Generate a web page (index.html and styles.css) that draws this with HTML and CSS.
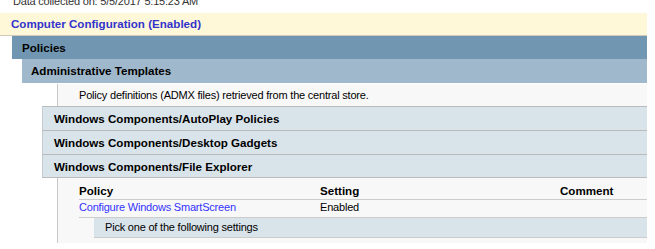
FILE: index.html
```html
<!DOCTYPE html>
<html lang="en">
<head>
<meta charset="utf-8">
<title>Group Policy Results</title>
<link rel="stylesheet" href="styles.css">
</head>
<body>
<div class="report">
  <div class="collected"><span class="collected-text">Data collected on: 5/5/2017 5:15:23 AM</span></div>
  <div class="he0">Computer Configuration (Enabled)</div>
  <div class="section lvl1">
    <div class="he1h">Policies</div>
    <div class="section lvl2">
      <div class="he1">Administrative Templates</div>
      <div class="section lvl3">
        <div class="desc">Policy definitions (ADMX files) retrieved from the central store.</div>
        <div class="he3">Windows Components/AutoPlay Policies</div>
        <div class="he3">Windows Components/Desktop Gadgets</div>
        <div class="he3 last">Windows Components/File Explorer</div>
        <div class="content">
          <div class="policy-table">
            <div class="row head">
              <div class="cell c-policy">Policy</div>
              <div class="cell c-setting">Setting</div>
              <div class="cell c-comment">Comment</div>
            </div>
            <div class="row item">
              <div class="cell c-policy"><a class="link" href="#">Configure Windows SmartScreen</a></div>
              <div class="cell c-setting">Enabled</div>
              <div class="cell c-comment"></div>
            </div>
            <div class="sub">Pick one of the following settings</div>
          </div>
        </div>
      </div>
    </div>
  </div>
</div>
</body>
</html>
```
FILE: styles.css
```css
body {
  margin: 0;
  background: #ffffff;
  font-family: "Liberation Sans", Arial, sans-serif;
  font-size: 11px;
  letter-spacing: -0.2px;
  color: #000000;
}

.report {
  width: 647px;
}

/* report timestamp, scrolled partly out of view */
.collected {
  height: 13px;
  overflow: hidden;
  padding-left: 13px;
  color: #333333;
}
.collected-text {
  display: block;
  margin-top: -6px;
  line-height: 14px;
}

/* headings */
.he0,
.he1h,
.he1,
.he3,
.row.head {
  font-weight: bold;
  font-size: 11.6px;
  letter-spacing: 0;
}

.he0 {
  height: 22px;
  line-height: 22px;
  padding-left: 11px;
  background: #fef7d8;
  color: #3333cc;
  border-bottom: 1px solid #cfcabb;
}

.lvl1 { margin-left: 12px; }
.lvl2 { margin-left: 10px; }
.lvl3 { margin-left: 20px; }

.he1h {
  height: 23px;
  line-height: 23px;
  padding-left: 10px;
  background: #7096b2;
}

.he1 {
  height: 24px;
  line-height: 24px;
  padding-left: 9px;
  background: #a0b8cb;
}

.desc {
  margin: 1px 0 0 15px;
  height: 22px;
  line-height: 22px;
  padding-left: 21px;
  background: #f8f8f8;
  border-left: 1px solid #c8c8c8;
}

.he3 {
  height: 23px;
  line-height: 23px;
  padding-left: 11px;
  background: #d9e3ea;
  border-top: 1px solid #bbbbbb;
  border-left: 1px solid #c4ccd2;
}
.he3.last {
  height: 22px;
  border-bottom: 1px solid #bbbbbb;
}

/* policy details under a category */
.content {
  margin-left: 15px;
  padding: 0 0 5px 21px;
  background: #f8f8f8;
  border-left: 1px solid #c8c8c8;
}

.row {
  display: grid;
  grid-template-columns: 241px 240px 1fr;
  border-bottom: 1px solid #cccccc;
}
.row.head {
  padding-top: 4px;
  line-height: 17px;
}
.row.item {
  line-height: 15px;
  padding-bottom: 2px;
}

.cell {
  white-space: nowrap;
}

.link {
  color: #3333ff;
  text-decoration: none;
}

.sub {
  margin-left: 15px;
  height: 19px;
  line-height: 19px;
  padding-left: 11px;
  background: #d9e3ea;
  border-bottom: 1px solid #cccccc;
}
```
